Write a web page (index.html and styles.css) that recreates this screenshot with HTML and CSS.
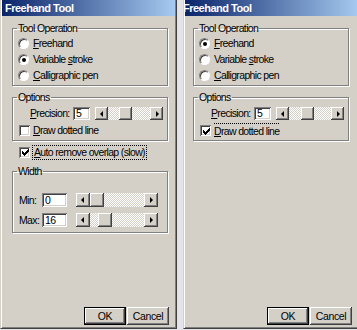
FILE: index.html
```html
<!DOCTYPE html>
<html>
<head>
<meta charset="utf-8">
<title>Freehand Tool</title>
<link rel="stylesheet" href="styles.css">
</head>
<body>
<div class="screen">
  <div class="dlg dlg-left">
    <div class="title"><span class="title-text">Freehand Tool</span></div>
    <div class="body">
      <fieldset class="grp grp-op">
        <legend>Tool Operation</legend>
        <div class="opt"><span class="radio"></span><span class="opt-text"><u>F</u>reehand</span></div>
        <div class="opt"><span class="radio on"></span><span class="opt-text">Variable <u>s</u>troke</span></div>
        <div class="opt"><span class="radio"></span><span class="opt-text"><u>C</u>alligraphic pen</span></div>
      </fieldset>
      <fieldset class="grp grp-options">
        <legend>Options</legend>
        <div class="prec-row">
          <span class="prec-lbl"><u>P</u>recision:</span>
          <span class="input in-prec">5</span>
          <div class="sb sb-prec">
            <span class="sb-btn"><span class="tri tri-l"></span></span>
            <span class="sb-track"><span class="sb-thumb" style="margin-left:11px"></span></span>
            <span class="sb-btn"><span class="tri tri-r"></span></span>
          </div>
        </div>
        <div class="chk-row"><span class="chk"></span><span class="chk-text"><u>D</u>raw dotted line</span></div>
      </fieldset>
      <div class="chk-row auto-row"><span class="chk on"><svg viewBox="0 0 7 7" width="7" height="7"><path d="M0 2h1v1h1v1h1V3h1V2h1V1h1V0h1v3H6v1H5v1H4v1H3v1H2V6H1V5H0z" fill="#000"/></svg></span><span class="chk-text focus"><u>A</u>uto remove overlap (slow)</span></div>
      <fieldset class="grp grp-width">
        <legend>Width</legend>
        <div class="w-row">
          <span class="w-lbl">Min:</span>
          <span class="input in-w">0</span>
          <div class="sb sb-w">
            <span class="sb-btn"><span class="tri tri-l"></span></span>
            <span class="sb-track"><span class="sb-thumb" style="margin-left:0px"></span></span>
            <span class="sb-btn"><span class="tri tri-r"></span></span>
          </div>
        </div>
        <div class="w-row">
          <span class="w-lbl">Max:</span>
          <span class="input in-w">16</span>
          <div class="sb sb-w">
            <span class="sb-btn"><span class="tri tri-l"></span></span>
            <span class="sb-track"><span class="sb-thumb" style="margin-left:8px"></span></span>
            <span class="sb-btn"><span class="tri tri-r"></span></span>
          </div>
        </div>
      </fieldset>
      <div class="btns"><button class="btn def">OK</button><button class="btn">Cancel</button></div>
    </div>
  </div>

  <div class="dlg dlg-right">
    <div class="title"><span class="title-text">Freehand Tool</span></div>
    <div class="body">
      <fieldset class="grp grp-op">
        <legend>Tool Operation</legend>
        <div class="opt"><span class="radio on"></span><span class="opt-text"><u>F</u>reehand</span></div>
        <div class="opt"><span class="radio"></span><span class="opt-text">Variable <u>s</u>troke</span></div>
        <div class="opt"><span class="radio"></span><span class="opt-text"><u>C</u>alligraphic pen</span></div>
      </fieldset>
      <fieldset class="grp grp-options">
        <legend>Options</legend>
        <div class="prec-row">
          <span class="prec-lbl"><u>P</u>recision:</span>
          <span class="input in-prec">5</span>
          <div class="sb sb-prec">
            <span class="sb-btn"><span class="tri tri-l"></span></span>
            <span class="sb-track"><span class="sb-thumb" style="margin-left:12px"></span></span>
            <span class="sb-btn"><span class="tri tri-r"></span></span>
          </div>
        </div>
        <div class="chk-row"><span class="chk on"><svg viewBox="0 0 7 7" width="7" height="7"><path d="M0 2h1v1h1v1h1V3h1V2h1V1h1V0h1v3H6v1H5v1H4v1H3v1H2V6H1V5H0z" fill="#000"/></svg></span><span class="chk-text focus-top"><u>D</u>raw dotted line</span></div>
      </fieldset>
      <div class="btns"><button class="btn def">OK</button><button class="btn">Cancel</button></div>
    </div>
  </div>
</div>
</body>
</html>
```

FILE: styles.css
```css
* { box-sizing: border-box; }
html, body { margin: 0; padding: 0; }
body {
  width: 357px;
  height: 330px;
  overflow: hidden;
  background: #e3e3e8;
  font-family: "Liberation Sans", Arial, sans-serif;
  font-size: 10.5px;
  letter-spacing: -0.65px;
  color: #000;
}
.screen { display: flex; height: 330px; }

.dlg {
  flex: none;
  display: flex;
  flex-direction: column;
  height: 329px;
  background: #d4d0c8;
  border-left: 1px solid #d4d0c8;
  border-bottom: 1px solid #404040;
  padding: 0 1px 1px 1px;
}
.dlg-left {
  width: 177px;
  border-right: 1px solid #404040;
  box-shadow: inset 1px 0 #fff, inset -1px -1px #808080;
}
.dlg-right {
  width: 176px;
  margin-left: 6px;
  padding-right: 0;
  box-shadow: inset 1px 0 #fff, inset 0 -1px #808080;
}

.title {
  flex: none;
  height: 16px;
  padding: 1px 0 0 3px;
  background: linear-gradient(to right, #0a246a, #a6caf0);
  color: #fff;
  font-family: "Liberation Sans", Arial, sans-serif;
  font-weight: bold;
  font-size: 11px;
  letter-spacing: -0.5px;
  line-height: 15px;
  white-space: nowrap;
  overflow: hidden;
}
.dlg-right .title { padding-left: 0; text-indent: -2px; }

.body {
  flex: 1;
  display: flex;
  flex-direction: column;
  padding: 6px 7px 0 10px;
}
.dlg-right .body { padding: 6px 10px 0 8px; }

.grp {
  margin: 0;
  min-width: 0;
  padding: 0 4px 2px 4px;
  border: 1px solid #808080;
  box-shadow: inset 1px 1px #fff, 1px 1px #fff;
}
.grp legend {
  padding: 0 1px;
  margin: 0;
  line-height: 13px;
}
.grp-options { margin-top: 5px; }
.grp-width { margin-top: 5px; padding-bottom: 5px; }

.opt {
  display: flex;
  align-items: center;
  height: 16px;
  line-height: 16px;
  white-space: nowrap;
}
.radio {
  flex: none;
  position: relative;
  width: 11px;
  height: 11px;
  margin-left: 1px;
  margin-right: 4px;
  border-radius: 50%;
  background: #fff;
  border: 1px solid;
  border-color: #808080 #fff #fff #808080;
  box-shadow: inset 1px 1px #404040;
}
.radio.on::after {
  content: "";
  position: absolute;
  left: 3px;
  top: 3px;
  width: 4px;
  height: 4px;
  border-radius: 50%;
  background: #000;
}

.prec-row {
  display: flex;
  align-items: center;
  height: 13px;
  margin-top: 3px;
  white-space: nowrap;
}
.prec-lbl { flex: none; width: 43px; margin-left: 13px; line-height: 13px; }
.input {
  flex: none;
  display: block;
  background: #fff;
  padding-left: 3px;
  box-shadow: inset 1px 1px #808080, inset -1px -1px #fff, inset 2px 2px #404040, inset -2px -2px #d4d0c8;
}
.in-prec { width: 17px; height: 13px; line-height: 13px; }
.in-w { width: 25px; height: 14px; line-height: 14px; }

.sb { flex: none; display: flex; }
.sb-prec { width: 68px; height: 13px; margin-left: 5px; }
.sb-w { width: 82px; height: 14px; margin-left: 9px; }
.sb-btn {
  flex: none;
  display: flex;
  align-items: center;
  justify-content: center;
  width: 13px;
  height: 100%;
  background: #d4d0c8;
  box-shadow: inset -1px -1px #404040, inset 1px 1px #fff, inset -2px -2px #808080;
}
.sb-w .sb-btn { width: 14px; }
.sb-track {
  flex: 1;
  display: flex;
  background: repeating-conic-gradient(#fff 0% 25%, #d4d0c8 0% 50%) 0 0 / 2px 2px;
}
.sb-thumb {
  flex: none;
  display: block;
  width: 13px;
  height: 100%;
  background: #d4d0c8;
  box-shadow: inset -1px -1px #404040, inset 1px 1px #fff, inset -2px -2px #808080;
}
.sb-w .sb-thumb { width: 14px; }
.tri { display: block; width: 0; height: 0; border-top: 3px solid transparent; border-bottom: 3px solid transparent; }
.tri-l { border-right: 3px solid #000; margin-right: 1px; }
.tri-r { border-left: 3px solid #000; margin-left: 1px; }

.chk-row {
  display: flex;
  align-items: center;
  height: 15px;
  margin-top: 3px;
  white-space: nowrap;
}
.chk {
  flex: none;
  display: flex;
  align-items: center;
  justify-content: center;
  width: 11px;
  height: 11px;
  margin-left: 2px;
  margin-right: 3px;
  background: #fff;
  box-shadow: inset 1px 1px #808080, inset -1px -1px #fff, inset 2px 2px #404040, inset -2px -2px #d4d0c8;
}
.chk svg { display: block; margin: 1px 0 0 1px; }
.chk-text { line-height: 13px; }
.auto-row { height: 16px; margin-top: 3px; margin-left: 0; }
.auto-row .chk { margin-left: 7px; margin-right: 2px; }
.focus { border: 1px dotted #000; padding: 0 1px 0 1px; }
.focus-top { align-self: stretch; border-top: 1px dotted #000; padding-top: 1px; line-height: 12px; }

.w-row {
  display: flex;
  align-items: center;
  height: 14px;
  white-space: nowrap;
}
.w-row:first-of-type { margin-top: 15px; }
.w-row + .w-row { margin-top: 6px; }
.w-lbl { flex: none; width: 23px; margin-left: 2px; line-height: 14px; }

.btns {
  margin-top: auto;
  margin-bottom: 2px;
  display: flex;
  justify-content: flex-end;
  gap: 1px;
  margin-right: -1px;
}
.dlg-right .btns { margin-right: -3px; }
.btn {
  width: 42px;
  height: 18px;
  margin: 0;
  padding: 0;
  border: 0;
  background: #d4d0c8;
  font-family: inherit;
  font-size: 10.5px;
  letter-spacing: -0.4px;
  line-height: 16px;
  color: #000;
  box-shadow: inset -1px -1px #404040, inset 1px 1px #fff, inset -2px -2px #808080;
}
.btn.def {
  border: 1px solid #000;
}
```
